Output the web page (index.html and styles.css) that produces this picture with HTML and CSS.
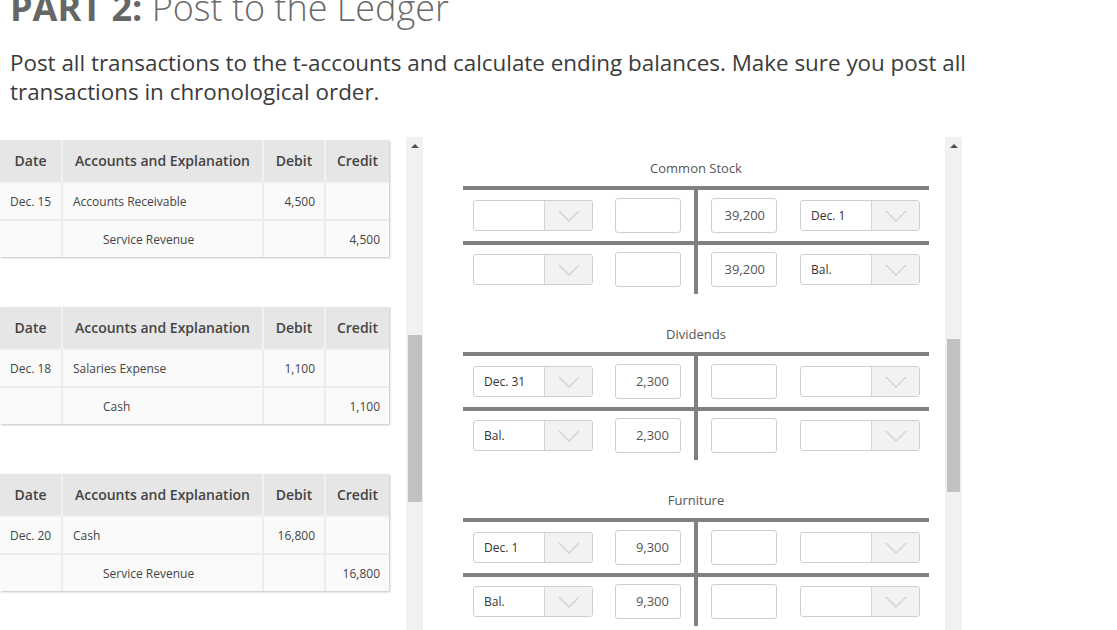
FILE: index.html
```html
<!DOCTYPE html>
<html>
<head>
<meta charset="utf-8">
<link rel="stylesheet" href="styles.css">
</head>
<body>
<h1 class="title"><span class="part">PART 2:</span> <span class="light">Post to the Ledger</span></h1>
<p class="intro">Post all transactions to the t-accounts and calculate ending balances. Make sure you post all transactions in chronological order.</p>

<div class="panes">
  <div class="left-pane">
    <table class="journal">
      <thead><tr><th class="c-date">Date</th><th class="c-acc">Accounts and Explanation</th><th class="c-deb">Debit</th><th class="c-cred">Credit</th></tr></thead>
      <tbody>
        <tr><td>Dec. 15</td><td>Accounts Receivable</td><td class="num">4,500</td><td class="num"></td></tr>
        <tr><td></td><td class="indent">Service Revenue</td><td class="num"></td><td class="num">4,500</td></tr>
      </tbody>
    </table>
    <table class="journal">
      <thead><tr><th class="c-date">Date</th><th class="c-acc">Accounts and Explanation</th><th class="c-deb">Debit</th><th class="c-cred">Credit</th></tr></thead>
      <tbody>
        <tr><td>Dec. 18</td><td>Salaries Expense</td><td class="num">1,100</td><td class="num"></td></tr>
        <tr><td></td><td class="indent">Cash</td><td class="num"></td><td class="num">1,100</td></tr>
      </tbody>
    </table>
    <table class="journal">
      <thead><tr><th class="c-date">Date</th><th class="c-acc">Accounts and Explanation</th><th class="c-deb">Debit</th><th class="c-cred">Credit</th></tr></thead>
      <tbody>
        <tr><td>Dec. 20</td><td>Cash</td><td class="num">16,800</td><td class="num"></td></tr>
        <tr><td></td><td class="indent">Service Revenue</td><td class="num"></td><td class="num">16,800</td></tr>
      </tbody>
    </table>
  </div>
  <div class="scrollbar">
    <div class="sb-arrow"><span class="tri"></span></div>
    <div class="sb-thumb thumb-left"></div>
  </div>

  <div class="right-pane">
    <div class="taccount">
      <div class="tname">Common Stock</div>
      <div class="tgrid">
        <div class="hbar top"></div>
        <div class="vbar"></div>
        <div class="hbar mid"></div>
        <div class="side left first">
          <div class="sel"><span class="sel-text"></span><span class="sel-btn"><svg width="22" height="12" viewBox="0 0 22 12"><polyline points="1,1 11,11 21,1"/></svg></span></div>
          <div class="inp"></div>
        </div>
        <div class="side right first">
          <div class="inp">39,200</div>
          <div class="sel"><span class="sel-text">Dec. 1</span><span class="sel-btn"><svg width="22" height="12" viewBox="0 0 22 12"><polyline points="1,1 11,11 21,1"/></svg></span></div>
        </div>
        <div class="side left last">
          <div class="sel"><span class="sel-text"></span><span class="sel-btn"><svg width="22" height="12" viewBox="0 0 22 12"><polyline points="1,1 11,11 21,1"/></svg></span></div>
          <div class="inp"></div>
        </div>
        <div class="side right last">
          <div class="inp">39,200</div>
          <div class="sel"><span class="sel-text">Bal.</span><span class="sel-btn"><svg width="22" height="12" viewBox="0 0 22 12"><polyline points="1,1 11,11 21,1"/></svg></span></div>
        </div>
      </div>
    </div>

    <div class="taccount">
      <div class="tname">Dividends</div>
      <div class="tgrid">
        <div class="hbar top"></div>
        <div class="vbar"></div>
        <div class="hbar mid"></div>
        <div class="side left first">
          <div class="sel"><span class="sel-text">Dec. 31</span><span class="sel-btn"><svg width="22" height="12" viewBox="0 0 22 12"><polyline points="1,1 11,11 21,1"/></svg></span></div>
          <div class="inp">2,300</div>
        </div>
        <div class="side right first">
          <div class="inp"></div>
          <div class="sel"><span class="sel-text"></span><span class="sel-btn"><svg width="22" height="12" viewBox="0 0 22 12"><polyline points="1,1 11,11 21,1"/></svg></span></div>
        </div>
        <div class="side left last">
          <div class="sel"><span class="sel-text">Bal.</span><span class="sel-btn"><svg width="22" height="12" viewBox="0 0 22 12"><polyline points="1,1 11,11 21,1"/></svg></span></div>
          <div class="inp">2,300</div>
        </div>
        <div class="side right last">
          <div class="inp"></div>
          <div class="sel"><span class="sel-text"></span><span class="sel-btn"><svg width="22" height="12" viewBox="0 0 22 12"><polyline points="1,1 11,11 21,1"/></svg></span></div>
        </div>
      </div>
    </div>

    <div class="taccount">
      <div class="tname">Furniture</div>
      <div class="tgrid">
        <div class="hbar top"></div>
        <div class="vbar"></div>
        <div class="hbar mid"></div>
        <div class="side left first">
          <div class="sel"><span class="sel-text">Dec. 1</span><span class="sel-btn"><svg width="22" height="12" viewBox="0 0 22 12"><polyline points="1,1 11,11 21,1"/></svg></span></div>
          <div class="inp">9,300</div>
        </div>
        <div class="side right first">
          <div class="inp"></div>
          <div class="sel"><span class="sel-text"></span><span class="sel-btn"><svg width="22" height="12" viewBox="0 0 22 12"><polyline points="1,1 11,11 21,1"/></svg></span></div>
        </div>
        <div class="side left last">
          <div class="sel"><span class="sel-text">Bal.</span><span class="sel-btn"><svg width="22" height="12" viewBox="0 0 22 12"><polyline points="1,1 11,11 21,1"/></svg></span></div>
          <div class="inp">9,300</div>
        </div>
        <div class="side right last">
          <div class="inp"></div>
          <div class="sel"><span class="sel-text"></span><span class="sel-btn"><svg width="22" height="12" viewBox="0 0 22 12"><polyline points="1,1 11,11 21,1"/></svg></span></div>
        </div>
      </div>
    </div>
  </div>
  <div class="scrollbar">
    <div class="sb-arrow"><span class="tri"></span></div>
    <div class="sb-thumb thumb-right"></div>
  </div>
</div>
</body>
</html>
```

FILE: styles.css
```css
html, body {
  margin: 0;
  padding: 0;
  background: #fff;
  overflow: hidden;
}
body {
  font-family: "Open Sans", "Liberation Sans", sans-serif;
  width: 1117px;
  height: 630px;
}
.title {
  margin: -12px 0 0 0;
  padding-left: 10px;
  font-size: 36px;
  line-height: 40px;
  font-weight: 400;
  color: #666;
  white-space: nowrap;
}
.title .part {
  font-weight: 700;
}
.title .light {
  font-family: "Open Sans Light", "Open Sans", sans-serif;
  font-weight: 300;
  color: #6a6a6a;
}
.intro {
  margin: 20px 0 0 0;
  padding-left: 10px;
  font-size: 22.4px;
  line-height: 29px;
  color: #3b3b3b;
  width: 1000px;
}
.panes {
  display: flex;
  margin-top: 31px;
  height: 493px;
  overflow: hidden;
}
.left-pane {
  width: 406px;
  padding-top: 3px;
  flex: none;
}
.journal {
  border-collapse: collapse;
  width: 389px;
  margin-bottom: 50px;
  box-shadow: 1px 1px 2px rgba(0,0,0,0.25);
  font-size: 12px;
  color: #444;
  table-layout: fixed;
}
.journal th {
  background: #e6e6e6;
  height: 41px;
  padding: 0;
  font-size: 14px;
  font-weight: 600;
  color: #444;
  text-align: center;
  border-left: 2px solid #f1f1f1;
  border-bottom: 1px solid #f1f1f1;
}
.journal th:first-child { border-left: none; }
.journal .c-date { width: 61px; }
.journal .c-acc { width: 199px; }
.journal .c-deb { width: 60px; }
.journal .c-cred { width: 63px; }
.journal td {
  background: #fafafa;
  height: 36px;
  padding: 0 10px;
  border-left: 2px solid #ececec;
  border-top: 2px solid #ececec;
  white-space: nowrap;
  vertical-align: middle;
}
.journal td:first-child { border-left: none; }
.journal td.num { text-align: right; padding-right: 9px; }
.journal td.indent { padding-left: 40px; }

.scrollbar {
  width: 17px;
  flex: none;
  background: #f1f1f1;
  display: flex;
  flex-direction: column;
  align-items: center;
}
.sb-arrow {
  height: 17px;
  width: 17px;
  display: flex;
  align-items: center;
  justify-content: center;
}
.tri {
  width: 0;
  height: 0;
  border-left: 4px solid transparent;
  border-right: 4px solid transparent;
  border-bottom: 4px solid #505050;
}
.sb-thumb {
  width: 14px;
  background: #c1c1c1;
}
.thumb-left { margin-top: 181px; height: 167px; }
.thumb-right { margin-top: 185px; height: 153px; width: 13px; }

.right-pane {
  width: 522px;
  flex: none;
  padding-top: 22px;
  box-sizing: border-box;
}
.taccount {
  margin-left: 40px;
  width: 466px;
  margin-bottom: 31px;
}
.tname {
  text-align: center;
  font-size: 13px;
  line-height: 18px;
  color: #555;
  margin-bottom: 9px;
}
.tgrid {
  display: grid;
  grid-template-columns: 231px 4px 231px;
  grid-template-rows: 4px 51px 4px 49px;
}
.hbar {
  grid-column: 1 / 4;
  background: #808080;
}
.hbar.top { grid-row: 1; }
.hbar.mid { grid-row: 3; }
.vbar {
  grid-column: 2;
  grid-row: 1 / 5;
  background: #808080;
}
.side {
  display: flex;
  align-items: center;
}
.side.left { grid-column: 1; padding-left: 10px; }
.side.right { grid-column: 3; padding-left: 13px; }
.side.first { grid-row: 2; }
.side.last { grid-row: 4; }
.side.left .inp { margin-left: 22px; }
.side.right .sel { margin-left: 23px; }

.sel {
  width: 120px;
  height: 31px;
  box-sizing: border-box;
  border: 1px solid #cfcfcf;
  border-radius: 3px;
  display: flex;
  background: #fff;
  overflow: hidden;
}
.sel-text {
  flex: 1;
  font-size: 12px;
  color: #333;
  line-height: 29px;
  padding-left: 10px;
}
.sel-btn {
  width: 47px;
  border-left: 1px solid #d6d6d6;
  background: #f2f2f2;
  display: flex;
  align-items: center;
  justify-content: center;
}
.sel-btn svg polyline {
  fill: none;
  stroke: #d2d2d2;
  stroke-width: 1.4;
}
.inp {
  width: 66px;
  height: 35px;
  box-sizing: border-box;
  border: 1px solid #cfcfcf;
  border-radius: 3px;
  background: #fff;
  text-align: right;
  padding-right: 11px;
  font-size: 13px;
  line-height: 33px;
  color: #555;
}
```
